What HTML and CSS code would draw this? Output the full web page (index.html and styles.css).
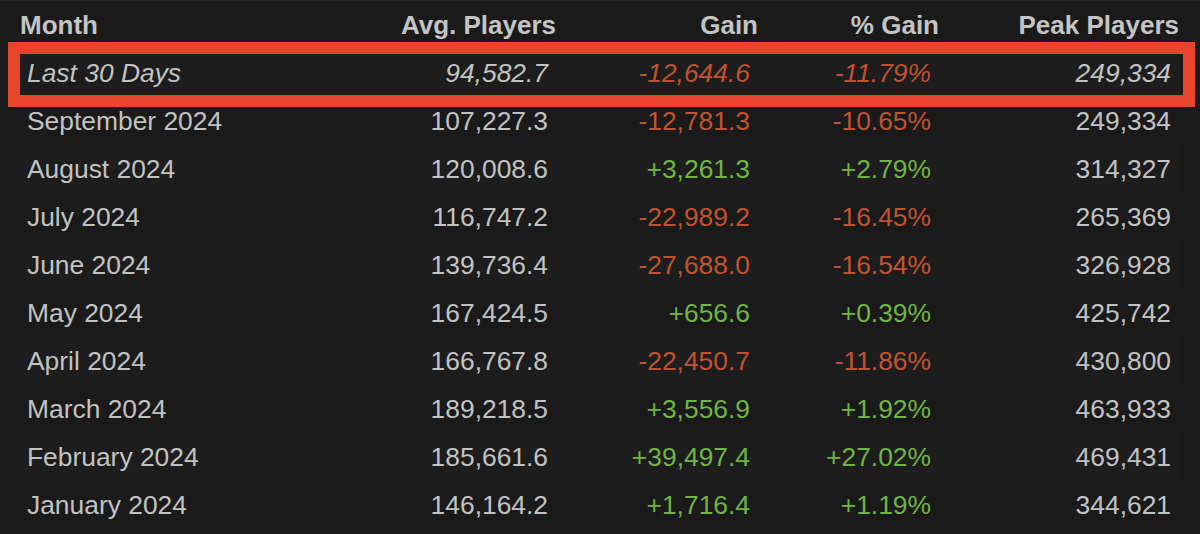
FILE: index.html
```html
<!DOCTYPE html>
<html lang="en">
<head>
<meta charset="utf-8">
<title>Monthly players</title>
<link rel="stylesheet" href="styles.css">
</head>
<body>
<div class="page">
  <div class="table">
    <div class="row head">
      <div class="cell month">Month</div>
      <div class="cell">Avg. Players</div>
      <div class="cell">Gain</div>
      <div class="cell">% Gain</div>
      <div class="cell">Peak Players</div>
    </div>
    <div class="row alt current">
      <div class="cell month">Last 30 Days</div>
      <div class="cell">94,582.7</div>
      <div class="cell neg">-12,644.6</div>
      <div class="cell neg">-11.79%</div>
      <div class="cell">249,334</div>
    </div>
    <div class="row">
      <div class="cell month">September 2024</div>
      <div class="cell">107,227.3</div>
      <div class="cell neg">-12,781.3</div>
      <div class="cell neg">-10.65%</div>
      <div class="cell">249,334</div>
    </div>
    <div class="row alt">
      <div class="cell month">August 2024</div>
      <div class="cell">120,008.6</div>
      <div class="cell pos">+3,261.3</div>
      <div class="cell pos">+2.79%</div>
      <div class="cell">314,327</div>
    </div>
    <div class="row">
      <div class="cell month">July 2024</div>
      <div class="cell">116,747.2</div>
      <div class="cell neg">-22,989.2</div>
      <div class="cell neg">-16.45%</div>
      <div class="cell">265,369</div>
    </div>
    <div class="row alt">
      <div class="cell month">June 2024</div>
      <div class="cell">139,736.4</div>
      <div class="cell neg">-27,688.0</div>
      <div class="cell neg">-16.54%</div>
      <div class="cell">326,928</div>
    </div>
    <div class="row">
      <div class="cell month">May 2024</div>
      <div class="cell">167,424.5</div>
      <div class="cell pos">+656.6</div>
      <div class="cell pos">+0.39%</div>
      <div class="cell">425,742</div>
    </div>
    <div class="row alt">
      <div class="cell month">April 2024</div>
      <div class="cell">166,767.8</div>
      <div class="cell neg">-22,450.7</div>
      <div class="cell neg">-11.86%</div>
      <div class="cell">430,800</div>
    </div>
    <div class="row">
      <div class="cell month">March 2024</div>
      <div class="cell">189,218.5</div>
      <div class="cell pos">+3,556.9</div>
      <div class="cell pos">+1.92%</div>
      <div class="cell">463,933</div>
    </div>
    <div class="row alt">
      <div class="cell month">February 2024</div>
      <div class="cell">185,661.6</div>
      <div class="cell pos">+39,497.4</div>
      <div class="cell pos">+27.02%</div>
      <div class="cell">469,431</div>
    </div>
    <div class="row">
      <div class="cell month">January 2024</div>
      <div class="cell">146,164.2</div>
      <div class="cell pos">+1,716.4</div>
      <div class="cell pos">+1.19%</div>
      <div class="cell">344,621</div>
    </div>
  </div>
  <div class="highlight"></div>
</div>
</body>
</html>
```

FILE: styles.css
```css
html, body {
  margin: 0;
  padding: 0;
  background: #1a1a1a;
}

body {
  font-family: "Liberation Sans", Arial, Helvetica, sans-serif;
  color: #c2c2c2;
  overflow: hidden;
}

.page {
  position: relative;
  width: 1200px;
  height: 534px;
  border-top: 1px solid #222222;
  box-sizing: border-box;
}

.table {
  margin-left: 17px;
  width: 1162px;
}

.row {
  display: grid;
  grid-template-columns: 262px 277px 202px 181px 240px;
  height: 48px;
  align-items: center;
  font-size: 26.4px;
}

.row.alt {
  background: #1d1d1d;
}

.cell {
  padding: 0 8px 0 10px;
  text-align: right;
  white-space: nowrap;
}

.cell.month {
  text-align: left;
}

.head {
  font-size: 26px;
  font-weight: bold;
  color: #c4c4c4;
}

.head .cell {
  padding: 0 0 0 3px;
}

.current {
  font-style: italic;
}

.neg {
  color: #c0532f;
}

.pos {
  color: #70b542;
}

.highlight {
  position: absolute;
  left: 8px;
  top: 41px;
  width: 1187px;
  height: 65px;
  border: 12px solid #e8432b;
  box-sizing: border-box;
}
```
